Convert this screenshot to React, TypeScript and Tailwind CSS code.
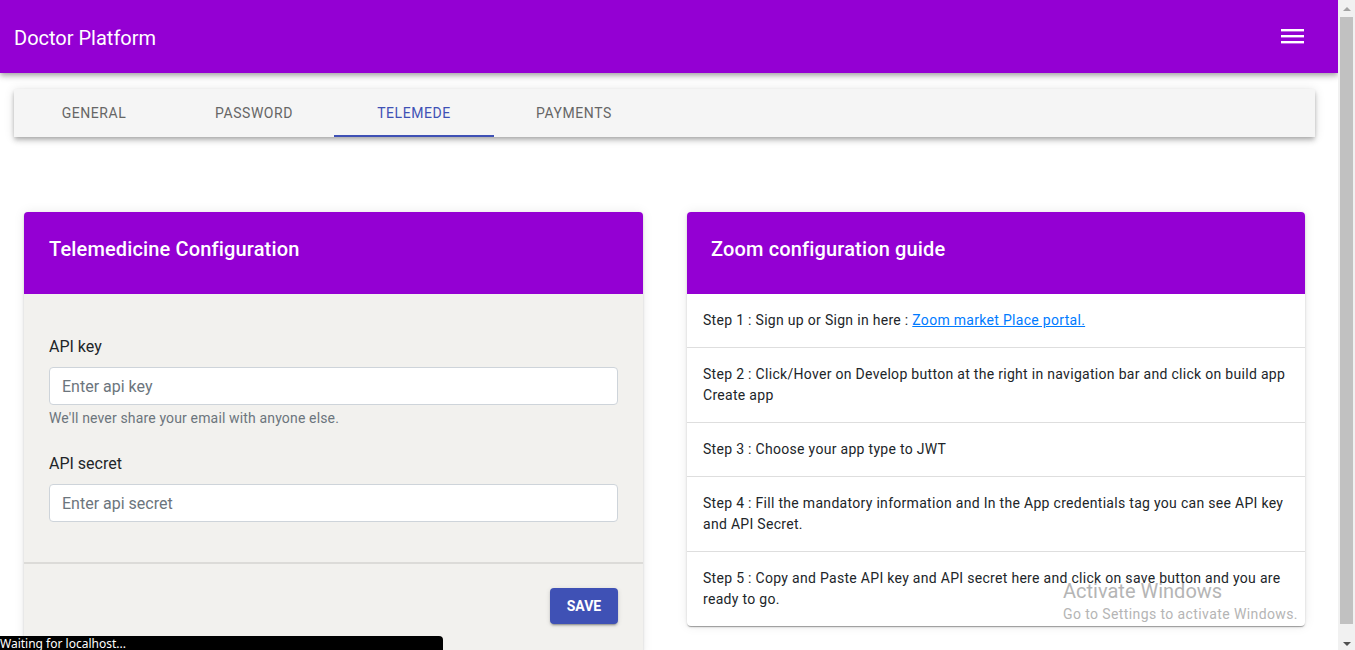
import { useState } from "react";

const tabs = ["General", "Password", "Telemede", "Payments"];

const steps: { text: string; link?: string }[] = [
  { text: "Step 1 : Sign up or Sign in here : ", link: "Zoom market Place portal." },
  {
    text: "Step 2 : Click/Hover on Develop button at the right in navigation bar and click on build app Create app",
  },
  { text: "Step 3 : Choose your app type to JWT" },
  {
    text: "Step 4 : Fill the mandatory information and In the App credentials tag you can see API key and API Secret.",
  },
  {
    text: "Step 5 : Copy and Paste API key and API secret here and click on save button and you are ready to go.",
  },
];

function MenuIcon() {
  return (
    <svg width="23" height="15" viewBox="0 0 23 15" aria-hidden>
      <rect x="0" y="0" width="23" height="2.4" fill="#fff" />
      <rect x="0" y="6" width="23" height="2.4" fill="#fff" />
      <rect x="0" y="12" width="23" height="2.4" fill="#fff" />
    </svg>
  );
}

function Field({
  label,
  placeholder,
  help,
}: {
  label: string;
  placeholder: string;
  help?: string;
}) {
  return (
    <div className={help ? "mb-6" : "mb-4"}>
      <label className="mb-2 block text-base leading-6 text-[#212529]">
        {label}
      </label>
      <input
        placeholder={placeholder}
        className="block h-[38px] w-full rounded-[4px] border border-[#ced4da] bg-white px-3 text-base text-[#495057] outline-none placeholder:text-[#6c757d]"
      />
      {help && (
        <div className="mt-[3px] text-sm leading-5 tracking-[0.15px] text-[#6c757d]">
          {help}
        </div>
      )}
    </div>
  );
}

function Scrollbar() {
  return (
    <div className="flex w-[17px] shrink-0 flex-col bg-[#f1f1f1]">
      <div className="flex h-[17px] items-center justify-center">
        <div className="h-0 w-0 border-x-[4px] border-b-[4px] border-x-transparent border-b-[#a3a3a3]" />
      </div>
      <div className="mx-[2px] h-[607px] bg-[#c1c1c1]" />
      <div className="flex flex-1 items-end justify-center pb-[4px]">
        <div className="h-0 w-0 border-x-[4px] border-t-[4px] border-x-transparent border-t-[#505050]" />
      </div>
    </div>
  );
}

export default function App() {
  const [active, setActive] = useState(2);

  return (
    <div
      className="relative flex h-[650px] w-[1355px] overflow-hidden bg-white"
      style={{ fontFamily: "Roboto, 'Liberation Sans', sans-serif" }}
    >
      <div className="w-[1338px] shrink-0">
        <header className="flex h-[73px] items-center justify-between bg-[#9400d3] pl-[14px] pr-[34px] shadow-[0_2px_4px_-1px_rgba(0,0,0,0.2),0_4px_5px_0_rgba(0,0,0,0.14),0_1px_10px_0_rgba(0,0,0,0.12)]">
          <div className="pt-[2px] text-[20px] leading-none text-white">Doctor Platform</div>
          <MenuIcon />
        </header>

        <nav className="ml-[14px] mr-[23px] mt-4 flex h-12 bg-[#f5f5f5] shadow-[0_2px_4px_-1px_rgba(0,0,0,0.2),0_4px_5px_0_rgba(0,0,0,0.14),0_1px_10px_0_rgba(0,0,0,0.12)]">
          {tabs.map((t, i) => (
            <button
              key={t}
              onClick={() => setActive(i)}
              className={`relative flex h-12 w-40 items-center justify-center text-sm font-normal uppercase tracking-[0.04em] ${
                i === active ? "text-[#3f51b5]" : "text-[#666666]"
              }`}
            >
              {t}
              {i === active && (
                <span className="absolute bottom-0 left-0 h-[2px] w-full bg-[#3f51b5]" />
              )}
            </button>
          ))}
        </nav>

        <div className="mt-[75px] flex items-start gap-[44px] pl-[24px]">
          <section className="w-[619px] rounded-[4px] bg-[#f2f1ee] shadow-[0_2px_1px_-1px_rgba(0,0,0,0.2),0_1px_1px_0_rgba(0,0,0,0.14),0_1px_3px_0_rgba(0,0,0,0.12),0_0_12px_rgba(0,0,0,0.08)]">
            <div className="rounded-t-[4px] bg-[#9400d3] px-[25px] pb-[33px] pt-[25px] text-xl font-medium leading-6 tracking-[0.15px] text-white">
              Telemedicine Configuration
            </div>
            <div className="px-[25px] pb-6 pt-[41px]">
              <Field
                label="API key"
                placeholder="Enter api key"
                help="We'll never share your email with anyone else."
              />
              <Field label="API secret" placeholder="Enter api secret" />
            </div>
            <div className="flex justify-end border-t-2 border-[#dcdbd8] px-[25px] pb-8 pt-6">
              <button className="h-9 w-[68px] rounded-[4px] bg-[#3f51b5] text-sm font-bold uppercase text-white shadow-[0_3px_1px_-2px_rgba(0,0,0,0.2),0_2px_2px_0_rgba(0,0,0,0.14),0_1px_5px_0_rgba(0,0,0,0.12)]">
                Save
              </button>
            </div>
          </section>

          <section className="w-[618px] rounded-[4px] bg-white shadow-[0_2px_1px_-1px_rgba(0,0,0,0.2),0_1px_1px_0_rgba(0,0,0,0.14),0_1px_3px_0_rgba(0,0,0,0.12),0_0_12px_rgba(0,0,0,0.08)]">
            <div className="h-[82px] rounded-t-[4px] bg-[#9400d3] px-6 pt-[25px] text-xl font-medium leading-6 tracking-[0.15px] text-white">
              Zoom configuration guide
            </div>
            <ul>
              {steps.map((s, i) => (
                <li
                  key={i}
                  className={`px-4 pb-4 pt-4 text-sm leading-[21px] tracking-[0.3px] text-[#212529] ${
                    i < steps.length - 1 ? "border-b border-[#dedede]" : ""
                  }`}
                >
                  {s.text}
                  {s.link && (
                    <a href="#" className="text-[#007bff] underline">
                      {s.link}
                    </a>
                  )}
                </li>
              ))}
            </ul>
          </section>
        </div>
      </div>

      <Scrollbar />

      <div className="pointer-events-none absolute left-[1063px] top-[579px] text-[#b5b5b5]">
        <div className="text-[20px] leading-6">Activate Windows</div>
        <div className="mt-[1px] text-sm leading-5 tracking-[0.4px]">
          Go to Settings to activate Windows.
        </div>
      </div>

      <div className="absolute bottom-0 left-0 flex h-[14px] w-[443px] items-start overflow-hidden rounded-tr-[4px] bg-black">
        <span
          className="text-[12px] leading-[16px] text-white"
          style={{ fontFamily: "'Segoe UI', 'Noto Sans', sans-serif" }}
        >
          Waiting for localhost...
        </span>
      </div>
    </div>
  );
}
